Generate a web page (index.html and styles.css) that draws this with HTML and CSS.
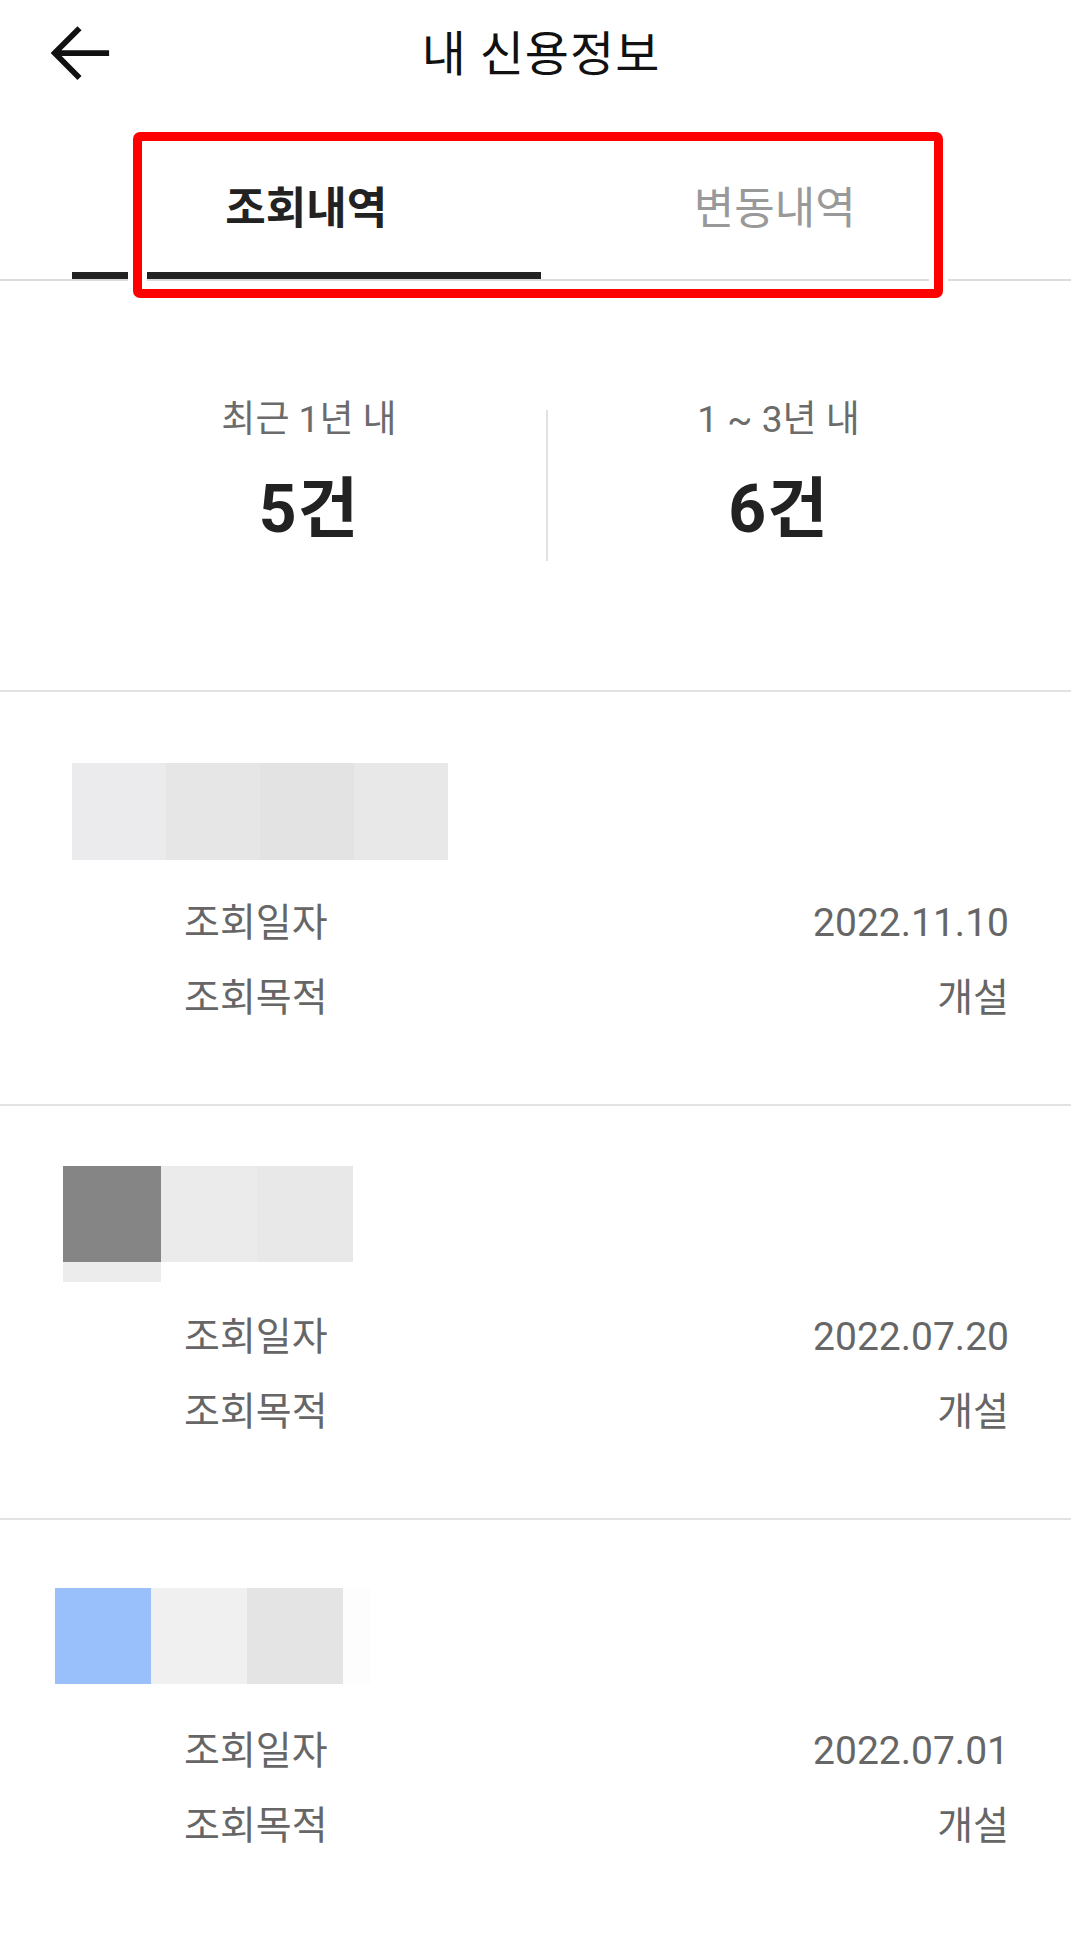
FILE: index.html
```html
<!DOCTYPE html>
<html lang="ko">
  <head>
    <meta charset="UTF-8" />
    <meta name="viewport" content="width=device-width, initial-scale=1.0" />
    <title>내 신용정보</title>
    <link rel="stylesheet" href="styles.css">
  </head>
  <body>
    <div class="screen">
      <header class="topbar">
        <button class="back" type="button" aria-label="뒤로가기">
          <svg width="66" height="62" viewBox="0 0 66 62">
            <path d="M64 29 H8 M33 3 L7 29 L33 55" fill="none" stroke="#111" stroke-width="6" />
          </svg>
        </button>
        <h1 class="title">내 신용정보</h1>
        <span class="spacer"></span>
      </header>

      <nav class="tabs">
        <a class="tab active">조회내역</a>
        <a class="tab">변동내역</a>
        <!-- annotation box drawn over the tab bar -->
        <div class="highlight"></div>
      </nav>

      <section class="summary">
        <div class="stat">
          <p class="stat-label">최근 1년 내</p>
          <p class="stat-value">5건</p>
        </div>
        <div class="divider"></div>
        <div class="stat">
          <p class="stat-label">1 ~ 3년 내</p>
          <p class="stat-value">6건</p>
        </div>
      </section>

      <ul class="history">
        <li class="record">
          <div class="logo-area">
            <div class="logo logo-first">
              <span class="px px-ebebed"></span>
              <span class="px px-e6e6e6"></span>
              <span class="px px-e3e3e3"></span>
              <span class="px px-e8e8e8"></span>
            </div>
          </div>
          <div class="rows">
            <div class="row"><span class="key">조회일자</span><span class="val">2022.11.10</span></div>
            <div class="row"><span class="key">조회목적</span><span class="val">개설</span></div>
          </div>
        </li>

        <li class="record">
          <div class="logo-area">
            <div class="logo logo-second">
              <span class="px px-858585"></span>
              <span class="px px-ebebeb"></span>
              <span class="px px-e8e8e8"></span>
            </div>
            <div class="logo-strip"></div>
          </div>
          <div class="rows">
            <div class="row"><span class="key">조회일자</span><span class="val">2022.07.20</span></div>
            <div class="row"><span class="key">조회목적</span><span class="val">개설</span></div>
          </div>
        </li>

        <li class="record">
          <div class="logo-area">
            <div class="logo logo-third">
              <span class="px px-99c0fb"></span>
              <span class="px px-f0f0f0"></span>
              <span class="px px-e4e4e4"></span>
              <span class="px px-fdfdfd"></span>
            </div>
          </div>
          <div class="rows">
            <div class="row"><span class="key">조회일자</span><span class="val">2022.07.01</span></div>
            <div class="row"><span class="key">조회목적</span><span class="val">개설</span></div>
          </div>
        </li>
      </ul>
    </div>
  </body>
</html>
```

FILE: styles.css
```css
body {
  margin: 0;
  background: #fff;
  font-family: Roboto, "Noto Sans CJK KR", sans-serif;
  color: #222;
}

.screen {
  width: 1071px;
  overflow: hidden;
}

/* top bar */
.topbar {
  display: flex;
  align-items: center;
  height: 110px;
}

.back {
  width: 111px;
  height: 110px;
  padding: 0 0 0 48px;
  border: none;
  background: none;
  display: flex;
  align-items: center;
  cursor: pointer;
}

.back svg {
  display: block;
}

.title {
  flex: 1;
  margin: 0;
  text-align: center;
  font-size: 48px;
  font-weight: 400;
  line-height: 60px;
  letter-spacing: 1px;
  color: #111;
}

.spacer {
  width: 100px;
}

/* tabs */
.tabs {
  position: relative;
  display: flex;
  padding: 0 62px 0 72px;
  border-bottom: 2px solid #dcdcdc;
}

.tab {
  flex: 1;
  box-sizing: border-box;
  height: 169px;
  padding-top: 70px;
  text-align: center;
  font-size: 44px;
  line-height: 58px;
  font-weight: 400;
  color: #999;
  border-bottom: 7px solid transparent;
}

.tab.active {
  font-weight: 700;
  color: #222;
  border-bottom-color: #222;
}

.highlight {
  position: absolute;
  left: 133px;
  top: 22px;
  width: 810px;
  height: 166px;
  box-sizing: border-box;
  border: 9px solid #ff0000;
  border-radius: 7px;
  box-shadow: 0 0 0 5px #fff, inset 0 0 0 5px #fff;
}

/* summary */
.summary {
  display: grid;
  grid-template-columns: 474px 2px 1fr;
  padding: 120px 62px 129px 72px;
  border-bottom: 2px solid #e2e2e2;
}

.stat {
  text-align: center;
}

.stat-label {
  margin: 0;
  font-size: 37px;
  line-height: 38px;
  color: #6b6b6b;
}

.stat-value {
  margin: 36px 0 0;
  font-size: 66px;
  line-height: 70px;
  font-weight: 700;
  letter-spacing: 1px;
  color: #222;
}

.divider {
  margin-top: 9px;
  height: 151px;
  background: #e2e2e2;
}

/* history list */
.history {
  list-style: none;
  margin: 0;
  padding: 0;
}

.record {
  padding: 60px 62px 68px 0;
}

.record + .record {
  border-top: 2px solid #e2e2e2;
}

.logo-area {
  display: flow-root;
  height: 134px;
}

.logo {
  display: flex;
}

.logo-first {
  margin: 11px 0 0 72px;
}

.logo-second {
  margin: 0 0 0 63px;
}

.logo-third {
  margin: 8px 0 0 55px;
}

.px {
  width: 96px;
  height: 96px;
}

.logo-first .px {
  width: 94px;
  height: 97px;
}

.px-ebebed { background: #ebebed; }
.px-e6e6e6 { background: #e6e6e6; }
.px-e3e3e3 { background: #e3e3e3; }
.px-e8e8e8 { background: #e8e8e8; }
.px-858585 { background: #858585; width: 98px; }
.px-ebebeb { background: #ebebeb; }
.px-99c0fb { background: #99c0fb; }
.px-f0f0f0 { background: #f0f0f0; }
.px-e4e4e4 { background: #e4e4e4; }
.px-fdfdfd { background: #fdfdfd; width: 28px; }

.logo-strip {
  width: 98px;
  height: 20px;
  margin-left: 63px;
  background: #ececec;
}

.rows {
  padding-left: 184px;
}

.row {
  display: flex;
  justify-content: space-between;
  align-items: center;
  height: 75px;
  font-size: 39px;
  line-height: 1;
  color: #666;
}
```
